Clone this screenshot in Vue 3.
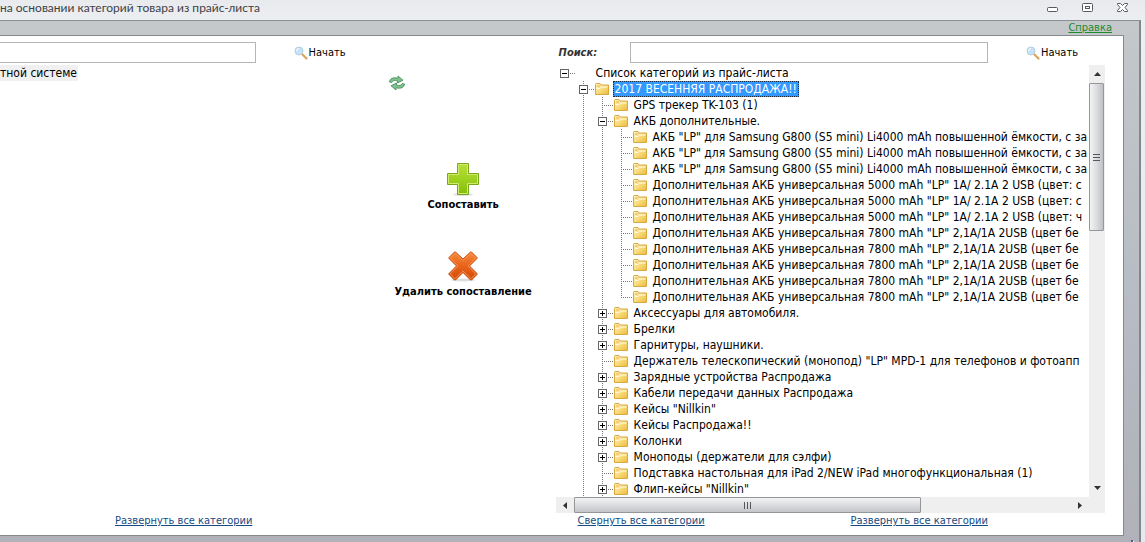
<script setup>
import { ref, computed } from 'vue'

const leftQuery = ref('')
const rightQuery = ref('')
const selectedId = ref(2)

const acc4000 = 'АКБ "LP" для Samsung G800 (S5 mini) Li4000 mAh повышенной ёмкости, с за'
const bank5000 = 'Дополнительная АКБ универсальная 5000 mAh "LP" 1A/ 2.1A 2 USB (цвет: '
const bank7800 = 'Дополнительная АКБ универсальная 7800 mAh "LP" 2,1A/1A 2USB (цвет бе'

const nodes = ref([
  { depth: 0, label: 'Список категорий из прайс-листа', open: true, root: true },
  { depth: 1, label: '2017 ВЕСЕННЯЯ РАСПРОДАЖА!!', open: true },
  { depth: 2, label: 'GPS трекер TK-103 (1)' },
  { depth: 2, label: 'АКБ дополнительные.', open: true },
  { depth: 3, label: acc4000 },
  { depth: 3, label: acc4000 },
  { depth: 3, label: acc4000 },
  { depth: 3, label: bank5000 + 'с' },
  { depth: 3, label: bank5000 + 'с' },
  { depth: 3, label: bank5000 + 'ч' },
  { depth: 3, label: bank7800 },
  { depth: 3, label: bank7800 },
  { depth: 3, label: bank7800 },
  { depth: 3, label: bank7800 },
  { depth: 3, label: bank7800, last: true },
  { depth: 2, label: 'Аксессуары для автомобиля.', open: false },
  { depth: 2, label: 'Брелки', open: false },
  { depth: 2, label: 'Гарнитуры, наушники.', open: false },
  { depth: 2, label: 'Держатель телескопический (монопод) "LP" MPD-1 для телефонов и фотоапп' },
  { depth: 2, label: 'Зарядные устройства Распродажа', open: false },
  { depth: 2, label: 'Кабели передачи данных Распродажа', open: false },
  { depth: 2, label: 'Кейсы "Nillkin"', open: false },
  { depth: 2, label: 'Кейсы Распродажа!!', open: false },
  { depth: 2, label: 'Колонки', open: false },
  { depth: 2, label: 'Моноподы (держатели для сэлфи)', open: false },
  { depth: 2, label: 'Подставка настольная для iPad 2/NEW iPad многофункциональная (1)' },
  { depth: 2, label: 'Флип-кейсы "Nillkin"', open: false }
].map((node, index) => ({ id: index + 1, ...node })))

const visibleNodes = computed(() => {
  let hiddenBelow = Infinity
  return nodes.value.filter((node) => {
    if (node.depth > hiddenBelow) return false
    hiddenBelow = node.open === false ? node.depth : Infinity
    return true
  })
})

function setAll(open) {
  nodes.value.forEach((node) => {
    if (node.open !== undefined) node.open = open
  })
}
</script>

<template>
  <div class="window">
    <header class="titlebar">
      <h1>на основании категорий товара из прайс-листа</h1>
      <div class="controls">
        <button type="button" aria-label="Свернуть">
          <svg width="11" height="11" viewBox="0 0 11 11"><rect x=".5" y="5.5" width="10" height="4" rx="1" fill="#fff" stroke="#555960" /></svg>
        </button>
        <button type="button" aria-label="Развернуть">
          <svg width="11" height="11" viewBox="0 0 11 11"><rect x=".5" y="1.5" width="10" height="8" rx="1" fill="#fff" stroke="#555960" /><rect x="3.5" y="4.5" width="4" height="2" fill="#fff" stroke="#555960" /></svg>
        </button>
        <button type="button" aria-label="Закрыть">
          <svg width="11" height="11" viewBox="0 0 11 11"><path d="M.5 1.5h3l2 2 2-2h3v1L8 5.500l2.500 3v1h-3l-2-2-2 2h-3v-1L3 5.500.5 2.500z" fill="#fff" stroke="#555960" /></svg>
        </button>
      </div>
    </header>

    <div class="frame">
      <nav class="help"><a href="#help">Справка</a></nav>

      <main class="panel">
        <section class="left">
          <form class="search" @submit.prevent>
            <input v-model="leftQuery" type="text" aria-label="Поиск по системе">
            <button type="submit" class="go">
              <svg width="14" height="14" viewBox="0 0 14 14"><path d="M8 8l4.500 4.500" stroke="#e0a458" stroke-width="2.200" stroke-linecap="round" /><circle cx="5" cy="5" r="4" fill="#c6e2f6" stroke="#b4cfe2" /><path d="M2.500 5A2.500 2.500 0 0 1 5 2.500" stroke="#fff" fill="none" /></svg>
              Начать
            </button>
          </form>
          <div class="rootnode">тной системе</div>
          <div class="links"><a href="#expand-left">Развернуть все категории</a></div>
        </section>

        <section class="middle">
          <button type="button" class="refresh" aria-label="Обновить">
            <svg width="18" height="16" viewBox="0 0 18 16">
              <path d="M1.500 7C1.800 3.500 5 2 10 3.200V1l5 4.200-5.500 2.800V6C6.500 5 4.500 5.500 3.800 7.500z" fill="#7fc08c" stroke="#3f8a55" stroke-width=".8" />
              <path d="M16.500 9c-.3 3.500-3.500 5-8.500 3.800V15l-5-4.200L8.500 8v2c3 1 5 .5 5.700-1.500z" fill="#7fc08c" stroke="#3f8a55" stroke-width=".8" />
            </svg>
          </button>
          <button type="button" class="action">
            <svg width="32" height="34" viewBox="0 0 32 34">
              <defs><linearGradient id="green" x1="0" y1="0" x2="0" y2="1"><stop offset="0" stop-color="#b9de3b" /><stop offset=".5" stop-color="#9fd21f" /><stop offset="1" stop-color="#84bb0c" /></linearGradient></defs>
              <ellipse cx="16" cy="31.500" rx="10" ry="1.500" fill="#ddd" />
              <path d="M10.500 .5h11v10h10v11h-10v10h-11v-10H.5v-11h10z" fill="url(#green)" stroke="#78a81a" />
              <path d="M11.500 1.500h9v10h10v9h-10v10h-9v-10h-10v-9h10z" fill="none" stroke="#d0eb6d" />
            </svg>
            <span>Сопоставить</span>
          </button>
          <button type="button" class="action">
            <svg width="32" height="34" viewBox="0 0 32 34">
              <defs><linearGradient id="orange" x1="0" y1="0" x2="0" y2="1"><stop offset="0" stop-color="#f68a3c" /><stop offset=".5" stop-color="#e9631b" /><stop offset="1" stop-color="#d24a08" /></linearGradient></defs>
              <ellipse cx="16" cy="30" rx="12" ry="1.500" fill="#ddd" />
              <path d="M7.500 2h1L16 9l7.500-7h1L30 7.500v1L22.500 16l7.500 7.500v1L24.500 30h-1L16 22.500 8.500 30h-1L2 24.500v-1L9.500 16 2 8.500v-1z" fill="url(#orange)" stroke="#c8500f" />
              <path d="M8 3.200l8 7.300 8-7.300L28.800 8 21 16l7.800 8-4.800 4.800-8-7.800-8 7.800L3.200 24l7.800-8-7.800-8z" fill="none" stroke="#f79a5c" stroke-width=".8" />
            </svg>
            <span>Удалить сопоставление</span>
          </button>
        </section>

        <section class="right">
          <form class="search" @submit.prevent>
            <label for="price-search">Поиск:</label>
            <input id="price-search" v-model="rightQuery" type="text">
            <button type="submit" class="go">
              <svg width="14" height="14" viewBox="0 0 14 14"><path d="M8 8l4.500 4.500" stroke="#e0a458" stroke-width="2.200" stroke-linecap="round" /><circle cx="5" cy="5" r="4" fill="#c6e2f6" stroke="#b4cfe2" /><path d="M2.500 5A2.500 2.500 0 0 1 5 2.500" stroke="#fff" fill="none" /></svg>
              Начать
            </button>
          </form>

          <div class="viewer">
            <ul class="tree" role="tree">
              <li
                v-for="node in visibleNodes"
                :key="node.id"
                class="row"
                role="treeitem"
                :aria-level="node.depth + 1"
                :aria-expanded="node.open"
                :aria-selected="node.id === selectedId"
              >
                <span v-for="level in node.depth" :key="level" class="cell" :class="{ line: level > 1 }" />
                <span class="cell branch" :class="{ line: node.depth > 0 && !node.last, half: node.last }">
                  <button
                    v-if="node.open !== undefined"
                    type="button"
                    class="toggle"
                    :class="{ plus: !node.open }"
                    :aria-label="node.open ? 'Свернуть' : 'Развернуть'"
                    @click="node.open = !node.open"
                  />
                </span>
                <span class="icon">
                  <svg v-if="!node.root" width="14" height="12" viewBox="0 0 14 12">
                    <defs><linearGradient id="folder" x1="0" y1="0" x2="1" y2="1"><stop offset="0" stop-color="#fff3bd" /><stop offset=".5" stop-color="#f8dc7c" /><stop offset="1" stop-color="#e9b93c" /></linearGradient></defs>
                    <path d="M.5 11.500v-10l.5-1h4l1 1.500h7.500v9.500z" fill="url(#folder)" stroke="#d9a83f" />
                    <path d="M1.500 5.500H5L6.500 4h6" fill="none" stroke="#fffbe4" />
                    <path d="M2 3h3" stroke="#e3b355" />
                  </svg>
                </span>
                <span class="label" :class="{ selected: node.id === selectedId }" @click="selectedId = node.id">{{ node.label }}</span>
              </li>
            </ul>
            <div class="vbar">
              <button type="button" aria-label="Вверх"><svg width="7" height="4" viewBox="0 0 7 4"><path d="M3.500 0L7 4H0z" fill="#333" /></svg></button>
              <div class="vthumb"><i /><i /><i /></div>
              <div class="vrest" />
              <button type="button" aria-label="Вниз"><svg width="7" height="4" viewBox="0 0 7 4"><path d="M0 0h7L3.500 4z" fill="#333" /></svg></button>
            </div>
            <div class="hbar">
              <button type="button" aria-label="Влево"><svg width="4" height="7" viewBox="0 0 4 7"><path d="M4 0v7L0 3.500z" fill="#333" /></svg></button>
              <div class="hthumb"><i /><i /><i /></div>
              <div class="hrest" />
              <button type="button" aria-label="Вправо"><svg width="4" height="7" viewBox="0 0 4 7"><path d="M0 0l4 3.500L0 7z" fill="#333" /></svg></button>
            </div>
            <div class="corner" />
          </div>

          <div class="links">
            <a href="#collapse" @click.prevent="setAll(false)">Свернуть все категории</a>
            <a href="#expand" @click.prevent="setAll(true)">Развернуть все категории</a>
          </div>
        </section>
      </main>
      <div class="grip" />
    </div>
  </div>
</template>

<style>
body {
  margin: 0;
  background: #e9ebee;
}
</style>

<style scoped>
.window {
  box-sizing: border-box;
  min-height: 100vh;
  display: flex;
  flex-direction: column;
  padding-right: 4px;
  overflow: hidden;
  background: linear-gradient(#e8eaed, #eceef1 20px, #e6e8ee);
  font: 12px/16px "DejaVu Sans Condensed", "DejaVu Sans", sans-serif;
  color: #000;
}

button {
  display: flex;
  align-items: center;
  padding: 0;
  border: 0;
  background: none;
  font: inherit;
  color: inherit;
}

svg {
  display: block;
  flex: none;
}

.titlebar {
  display: flex;
  justify-content: space-between;
  align-items: center;
  height: 20px;
  padding-right: 13px;
}

.titlebar h1 {
  margin: 0;
  padding-bottom: 4px;
  font: 12px/16px Lato, "Noto Sans", sans-serif;
  color: #3c3f45;
}

.controls {
  display: flex;
  gap: 24px;
  padding-bottom: 5px;
}

.frame {
  flex: 1;
  display: flex;
  flex-direction: column;
  position: relative;
  padding: 0 15px 7px 0;
  border-top: 1px solid #8b8f92;
  border-right: 2px solid #83878c;
  background: linear-gradient(#c4c8cb, #b8bcc4 50%, #b0b1b9);
}

.help {
  display: flex;
  justify-content: flex-end;
  height: 14px;
  padding-right: 12px;
  font-size: 11px;
  line-height: 14px;
}

.help a {
  color: #1d8a2c;
}

.panel {
  flex: 1;
  display: grid;
  grid-template-columns: 373fr 183px 568fr;
  padding-top: 6px;
  border: 1px solid #85898c;
  border-left: 0;
  background: #fff;
}

.left,
.right {
  display: flex;
  flex-direction: column;
  min-width: 0;
}

.right {
  padding-right: 18px;
}

.search {
  display: flex;
  align-items: center;
  margin-bottom: 2px;
  font-size: 11px;
}

.search input {
  box-sizing: border-box;
  flex: 1;
  min-width: 0;
  height: 21px;
  padding: 0 4px;
  border: 1px solid #b5b5b5;
  background: #fff;
  font: inherit;
}

.left .search input {
  border-left: 0;
}

.search label {
  width: 71px;
  padding-left: 3px;
  font-weight: bold;
  font-style: italic;
  color: #333;
}

.go {
  gap: 1px;
  margin: 0 27px 0 38px;
}

.rootnode {
  align-self: flex-start;
  padding-right: 1px;
  background: #f0f0f0;
}

.left .links {
  margin-top: auto;
  padding-left: 115px;
}

.links {
  display: flex;
  gap: 146px;
  padding-bottom: 6px;
  font-size: 11px;
  line-height: 16px;
}

.right .links {
  padding-left: 22px;
}

.links a {
  color: #164a82;
}

.middle {
  display: flex;
  flex-direction: column;
  align-items: center;
  padding-top: 33px;
  padding-right: 2px;
}

.refresh {
  align-self: flex-start;
  margin-left: 15px;
}

.action {
  flex-direction: column;
  margin-top: 72px;
  font-weight: bold;
  font-size: 11px;
  line-height: 16px;
}

.action + .action {
  margin-top: 37px;
}

.viewer {
  display: grid;
  grid-template-columns: 1fr 16px;
  min-width: 0;
}

.tree {
  margin: 0;
  padding: 0;
  min-width: 0;
  overflow: hidden;
  list-style: none;
}

.row {
  display: flex;
  align-items: center;
  height: 16px;
  white-space: nowrap;
}

.cell {
  flex: none;
  box-sizing: border-box;
  display: flex;
  align-items: center;
  width: 19px;
  height: 16px;
  padding-left: 4px;
  background-repeat: no-repeat;
  --v: repeating-linear-gradient(#777 0 1px, transparent 1px 2px);
  --h: repeating-linear-gradient(90deg, #777 0 1px, transparent 1px 2px);
}

.line {
  background-image: var(--v);
  background-position: 8px 0;
  background-size: 1px 16px;
}

.branch {
  background-image: var(--h);
  background-position: 8px 8px;
  background-size: 11px 1px;
}

.branch.line {
  background-image: var(--v), var(--h);
  background-position: 8px 0, 8px 8px;
  background-size: 1px 16px, 11px 1px;
}

.branch.half {
  background-image: var(--v), var(--h);
  background-position: 8px 0, 8px 8px;
  background-size: 1px 8px, 11px 1px;
}

.toggle {
  width: 9px;
  height: 9px;
  border: 1px solid #666;
  background: linear-gradient(#000, #000) center / 5px 1px no-repeat, #fff;
}

.toggle.plus {
  background: linear-gradient(#000, #000) center / 5px 1px no-repeat, linear-gradient(#000, #000) center / 1px 5px no-repeat, #fff;
}

.icon {
  flex: none;
  width: 17px;
  padding-left: 1px;
}

.label {
  margin-left: 1px;
  padding: 0 1px;
  border: 1px solid transparent;
  line-height: 14px;
}

.selected {
  padding: 0 1px;
  border: 1px dotted #1a2a40;
  background: #3399ff;
  color: #fff;
}

.vbar,
.hbar,
.corner {
  background: #efefef;
}

.vbar,
.hbar {
  display: flex;
}

.vbar {
  flex-direction: column;
}

.vbar button,
.hbar button {
  flex: none;
  justify-content: center;
  width: 16px;
  height: 18px;
}

.hbar button {
  width: 18px;
  height: 16px;
}

.vthumb,
.hthumb {
  display: flex;
  align-items: center;
  justify-content: center;
  gap: 2px;
  border: 1px solid #94969a;
  border-radius: 1px;
}

.vthumb {
  flex: 147;
  flex-direction: column;
  margin-right: 1px;
  background: linear-gradient(90deg, #f3f3f4, #dcdde0 50%, #bfc0c4);
}

.vrest {
  flex: 249;
}

.hthumb {
  flex: 347;
  background: linear-gradient(#f3f3f4, #dcdde0 50%, #c4c5c9);
}

.hrest {
  flex: 150;
}

.vthumb i {
  width: 7px;
  height: 1px;
  background: #55585c;
}

.hthumb i {
  width: 1px;
  height: 7px;
  background: #55585c;
}

.grip {
  position: absolute;
  right: 6px;
  bottom: 1px;
  width: 2px;
  height: 2px;
  background: #4c6284;
  box-shadow: 1px 1px #fff;
}
</style>
